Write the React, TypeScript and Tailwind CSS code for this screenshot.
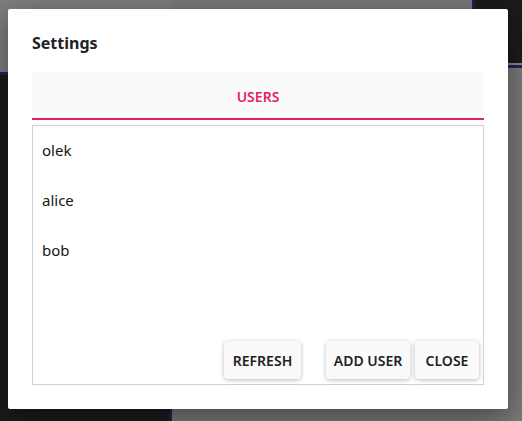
const users = ['olek', 'alice', 'bob']

function ActionButton({ label, className = '' }: { label: string; className?: string }) {
  return (
    <button
      className={`h-[38px] rounded-[4px] bg-[#fafafa] text-[14px] font-semibold text-[#222] shadow-[0_1px_4px_rgba(0,0,0,0.28)] ${className}`}
    >
      {label}
    </button>
  )
}

export default function App() {
  return (
    <div
      className="relative h-[421px] w-[522px] overflow-hidden bg-[#7b7b7b]"
      style={{ fontFamily: '"Noto Sans", "Open Sans", sans-serif' }}
    >
      {/* dimmed app behind the dialog */}
      <div className="flex h-full w-full">
        <div className="flex w-[169px] flex-col">
          <div className="h-[72px] bg-[#7f7f7f]" />
          <div className="h-[3px] bg-[#1f2358]" />
          <div className="flex-1 bg-[#1b1b1b]" />
        </div>
        <div className="flex w-[3px] flex-col">
          <div className="h-[75px] bg-[#7f7f7f]" />
          <div className="flex-1 bg-[#1f2358]" />
        </div>
        <div className="flex-1 bg-[#7a7a7a]" />
        <div className="flex w-[3px] flex-col">
          <div className="h-[64px] bg-[#1f2358]" />
          <div className="flex-1 bg-[#7a7a7a]" />
        </div>
        <div className="flex w-[47px] flex-col">
          <div className="h-[63px] bg-[#1b1b1b]" />
          <div className="h-[2px] bg-[#8a8a8a]" />
          <div className="h-[3px] bg-[#1f2358]" />
          <div className="flex-1 bg-[#7a7a7a]" />
        </div>
      </div>

      {/* dialog */}
      <div className="absolute left-[8px] top-[9px] flex h-[400px] w-[500px] flex-col rounded-[2px] bg-white px-[24px] shadow-[0_8px_30px_rgba(0,0,0,0.45)]">
        <h2 className="pt-[23px] text-[16px] font-bold leading-[22px] text-[#222]">Settings</h2>

        <div className="mt-[18px] flex h-[48px] items-center justify-center border-b-2 border-[#e91e63] bg-[#fafafa]">
          <span className="pt-[2px] text-[14px] font-semibold text-[#e91e63]">USERS</span>
        </div>

        <div className="mt-[5px] flex h-[260px] flex-col border border-[#d0d0d0]">
          <ul className="flex-1">
            {users.map((u) => (
              <li key={u} className="flex h-[50px] items-center px-[9px] pb-[2px] text-[15px] text-[#151515]">
                {u}
              </li>
            ))}
          </ul>
          <div className="flex justify-end pb-[5px] pr-[4px]">
            <ActionButton label="REFRESH" className="w-[77px]" />
            <ActionButton label="ADD USER" className="ml-[25px] w-[84px]" />
            <ActionButton label="CLOSE" className="ml-[5px] w-[64px]" />
          </div>
        </div>
      </div>
    </div>
  )
}
